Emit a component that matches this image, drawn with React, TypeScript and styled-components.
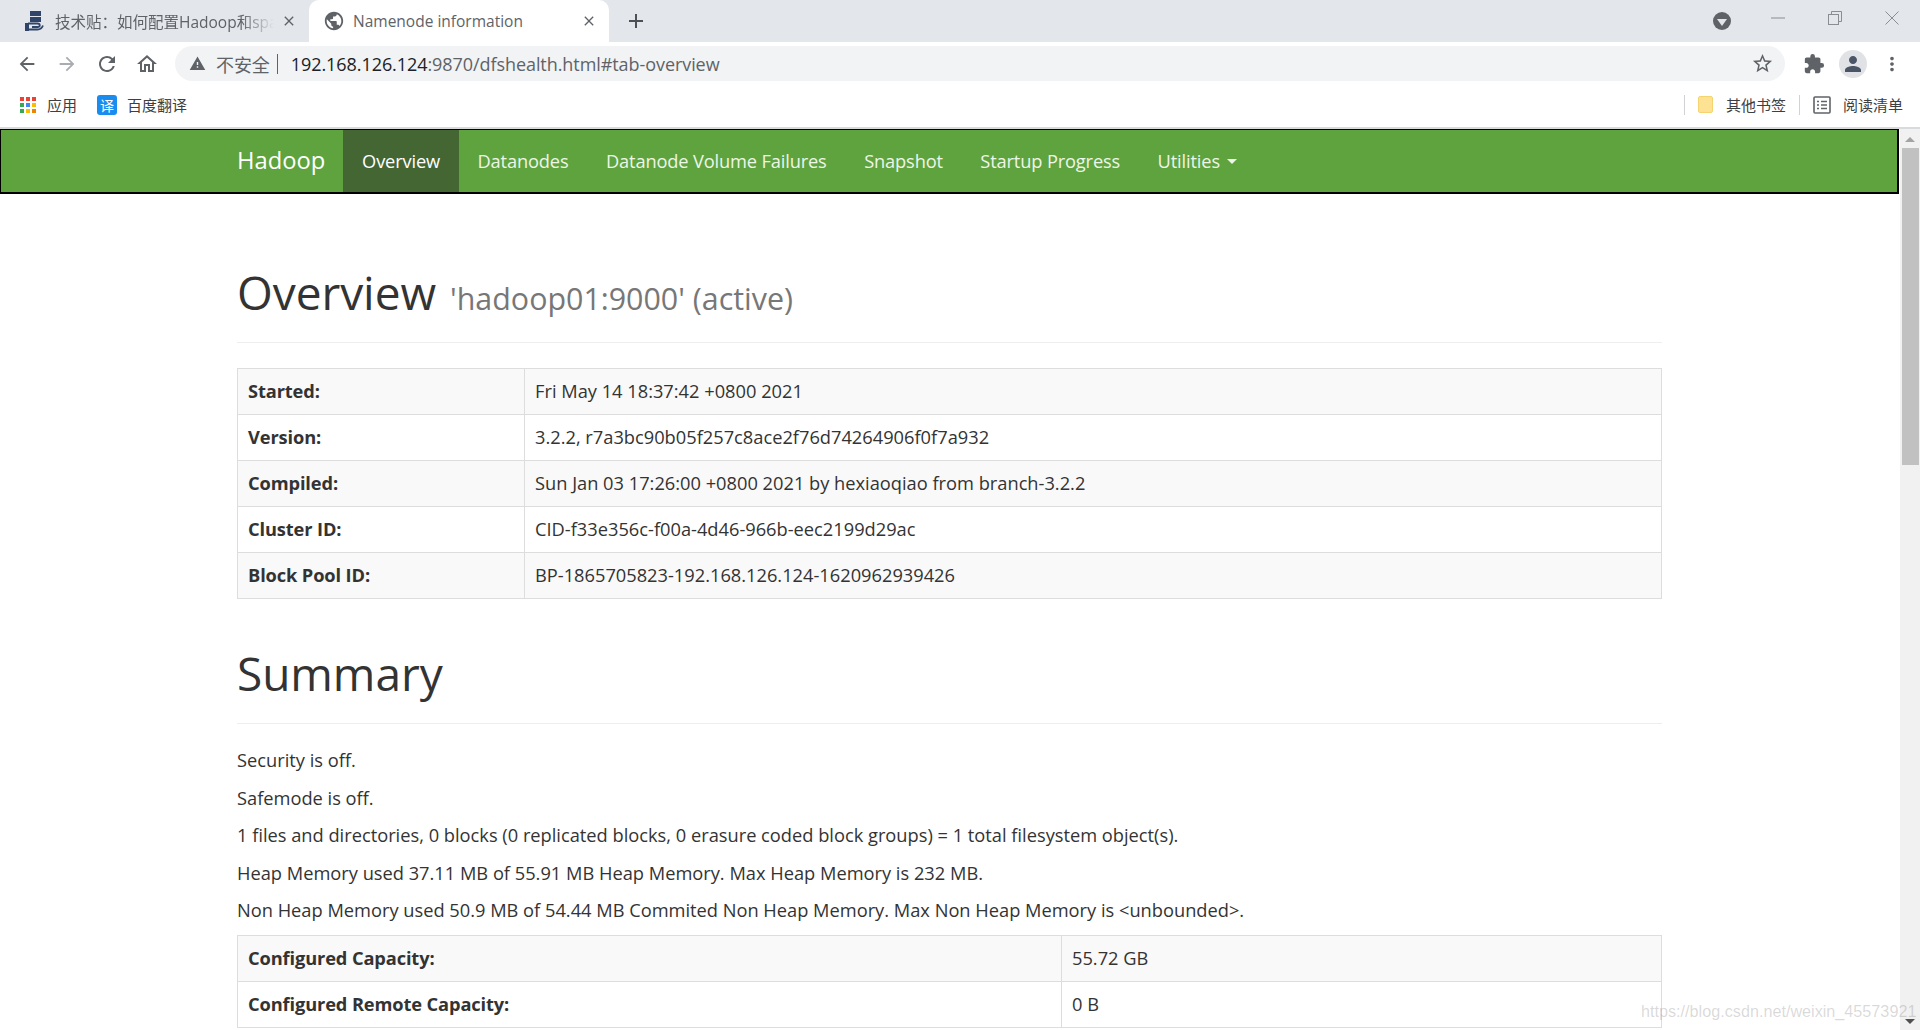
import React from 'react';
import styled, { createGlobalStyle } from 'styled-components';
import {
  MdAdd,
  MdArrowBack,
  MdArrowForward,
  MdClose,
  MdExtension,
  MdMoreVert,
  MdOutlineHome,
  MdPerson,
  MdPublic,
  MdRefresh,
  MdStarBorder,
  MdWarning,
} from 'react-icons/md';

const UI_FONT = '"Open Sans", "Noto Sans CJK SC", sans-serif';

const GlobalStyle = createGlobalStyle`
  html, body {
    margin: 0;
    height: 100%;
    overflow: hidden;
    background: #fff;
  }
  * { box-sizing: border-box; }
`;

const Window = styled.div`
  position: relative;
  display: flex;
  flex-direction: column;
  width: 1920px;
  height: 1030px;
  overflow: hidden;
  font-family: ${UI_FONT};
`;

const TabStrip = styled.div`
  display: flex;
  align-items: center;
  height: 42px;
  flex: none;
  background: #e3e6ea;
`;

const Tab = styled.div<{ $active?: boolean }>`
  display: flex;
  align-items: center;
  width: ${(p) => (p.$active ? '300px' : '309px')};
  height: 42px;
  padding: ${(p) => (p.$active ? '0 12px 0 14px' : '0 12px 0 24px')};
  border-radius: ${(p) => (p.$active ? '10px 10px 0 0' : '0')};
  background: ${(p) => (p.$active ? '#fff' : 'transparent')};
  color: #5f6368;
  flex: none;
`;

const TabTitle = styled.span<{ $fade?: boolean }>`
  flex: 1;
  margin-left: ${(p) => (p.$fade ? '11px' : '8px')};
  margin-right: ${(p) => (p.$fade ? '7px' : '0')};
  overflow: hidden;
  white-space: nowrap;
  font-size: 15.5px;
  ${(p) =>
    p.$fade &&
    `-webkit-mask-image: linear-gradient(to right, #000 85%, transparent 100%);
     mask-image: linear-gradient(to right, #000 85%, transparent 100%);`}
`;

const NewTab = styled.div`
  display: flex;
  margin-left: 15px;
  color: #4d5156;
`;

const StripRight = styled.div`
  display: flex;
  align-items: center;
  margin-left: auto;
  height: 42px;
`;

const TabSearch = styled.div`
  width: 18px;
  height: 18px;
  margin-right: 18px;
  border-radius: 50%;
  background: #5f6368;
  display: flex;
  align-items: center;
  justify-content: center;
  &::after {
    content: '';
    margin-top: 3px;
    border-left: 5px solid transparent;
    border-right: 5px solid transparent;
    border-top: 7px solid #e3e6ea;
  }
`;

const WindowButton = styled.div`
  display: flex;
  justify-content: center;
  width: 57px;
  margin-top: -6px;
  color: #8a8d91;
`;

const Toolbar = styled.div`
  display: flex;
  align-items: center;
  height: 42px;
  flex: none;
  background: #fff;
  padding-left: 7px;
  padding-top: 1px;
`;

const ToolButton = styled.div<{ $dim?: boolean; $width?: number }>`
  display: flex;
  align-items: center;
  justify-content: center;
  width: ${(p) => p.$width ?? 40}px;
  color: ${(p) => (p.$dim ? '#a9acb0' : '#5f6368')};
  flex: none;
`;

const Omnibox = styled.div`
  display: flex;
  align-items: center;
  width: 1610px;
  height: 35px;
  margin-left: 8px;
  margin-right: 9px;
  padding: 0 11px 0 14px;
  border-radius: 18px;
  background: #f1f3f4;
  font-size: 18px;
  letter-spacing: -0.07px;
  flex: none;
`;

const Insecure = styled.span`
  margin-left: 10px;
  color: #5f6368;
  font-size: 18px;
`;

const Divider = styled.span`
  width: 1px;
  height: 20px;
  margin: 0 13px 0 7px;
  background: #5f6368;
`;

const Host = styled.span`
  color: #202124;
`;

const UrlRest = styled.span`
  flex: 1;
  color: #5f6368;
`;

const Avatar = styled.div`
  display: flex;
  align-items: center;
  justify-content: center;
  width: 28px;
  height: 28px;
  margin: 0 11px 0 6px;
  border-radius: 50%;
  background: #e0e2e6;
  color: #4a5568;
`;

const BookmarkBar = styled.div`
  display: flex;
  align-items: center;
  height: 43px;
  flex: none;
  padding: 0 17px 2px 20px;
  background: #fff;
  font-size: 15px;
  color: #3c4043;
`;

const Bookmark = styled.div<{ $gap: number; $after: number }>`
  display: flex;
  align-items: center;
  gap: ${(p) => p.$gap}px;
  margin-right: ${(p) => p.$after}px;
`;

const AppsGrid = styled.div`
  display: grid;
  grid-template-columns: repeat(3, 4px);
  grid-auto-rows: 4px;
  gap: 2px;
`;

const AppDot = styled.i<{ $color: string }>`
  background: ${(p) => p.$color};
`;

const TranslateBadge = styled.div`
  display: flex;
  align-items: center;
  justify-content: center;
  width: 20px;
  height: 20px;
  border-radius: 3px;
  background: #1a8cf0;
  color: #fff;
  font-size: 14px;
`;

const BarSeparator = styled.div`
  width: 1px;
  height: 20px;
  background: #d0d2d5;
`;

const BookmarksRight = styled.div`
  display: flex;
  align-items: center;
  margin-left: auto;
`;

const BookmarkGlyph = styled.svg`
  margin-left: 13px;
`;

const Viewport = styled.div`
  display: flex;
  flex: 1;
  min-height: 0;
  border-top: 2px solid #d9dadc;
`;

const Page = styled.div`
  flex: 1;
  min-width: 0;
  overflow: hidden;
  color: #333;
  font-size: 18.25px;
  line-height: 25px;
`;

const Navbar = styled.nav`
  display: flex;
  width: 1899px;
  height: 65px;
  padding-left: 236px;
  background: #5ea33e;
  border: 1px solid #000;
  border-width: 1px 2px 2px 1px;
`;

const Brand = styled.a`
  display: flex;
  align-items: center;
  padding: 0 18px 2px 0;
  font-size: 23.75px;
  color: #fff;
`;

const NavLink = styled.a<{ $active?: boolean }>`
  display: flex;
  align-items: center;
  gap: 7px;
  padding: 0 18.75px 2px;
  font-size: 18.25px;
  letter-spacing: -0.15px;
  color: ${(p) => (p.$active ? '#fff' : '#eef5e9')};
  background: ${(p) => (p.$active ? '#446633' : 'transparent')};
`;

const Caret = styled.span`
  border-left: 5px solid transparent;
  border-right: 5px solid transparent;
  border-top: 5px solid #eef5e9;
  margin-top: 2px;
`;

const Content = styled.main`
  width: 1425px;
  margin-left: 237px;
`;

const PageHeader = styled.div<{ $top: number; $height: number }>`
  display: flex;
  align-items: flex-end;
  height: ${(p) => p.$height}px;
  margin-top: ${(p) => p.$top}px;
  padding-bottom: 25px;
  border-bottom: 1px solid #eee;
`;

const Heading = styled.h1`
  margin: 0;
  font-size: 46px;
  line-height: 50px;
  font-weight: 400;
  letter-spacing: -0.05px;
  color: #333;
`;

const HeadingNote = styled.small`
  margin-left: 14px;
  font-size: 30.4px;
  line-height: 1;
  letter-spacing: 0;
  color: #777;
`;

const InfoTable = styled.table<{ $labelWidth: number; $top: number }>`
  width: 100%;
  margin-top: ${(p) => p.$top}px;
  border-collapse: collapse;
  table-layout: fixed;

  th, td {
    height: 46px;
    padding: 0 10px 2px;
    border: 1px solid #ddd;
    text-align: left;
  }
  th {
    width: ${(p) => p.$labelWidth}px;
    font-weight: 700;
    letter-spacing: -0.12px;
  }
  tr:nth-child(odd) {
    background: #f9f9f9;
  }
`;

const Para = styled.p`
  margin: 0 0 12.5px;
`;

const Summary = styled.div`
  margin-top: 23px;
`;

const Scrollbar = styled.div`
  display: flex;
  flex-direction: column;
  align-items: center;
  width: 20px;
  margin-left: 1px;
  flex: none;
  background: #f1f1f1;
`;

const ScrollArrow = styled.div<{ $down?: boolean }>`
  width: 0;
  margin: ${(p) => (p.$down ? 'auto 0 6px' : '8px 0 6px')};
  border-left: 5px solid transparent;
  border-right: 5px solid transparent;
  ${(p) => (p.$down ? 'border-top: 5px solid #505050;' : 'border-bottom: 5px solid #a3a3a3;')}
`;

const ScrollThumb = styled.div`
  width: 17px;
  height: 317px;
  background: #c1c1c1;
`;

const Watermark = styled.div`
  position: absolute;
  left: 1641px;
  top: 999px;
  font-family: "Liberation Sans", sans-serif;
  font-size: 16.2px;
  line-height: 24px;
  white-space: nowrap;
  color: rgba(120, 120, 120, 0.28);
`;

const overviewRows = [
  ['Started:', 'Fri May 14 18:37:42 +0800 2021'],
  ['Version:', '3.2.2, r7a3bc90b05f257c8ace2f76d74264906f0f7a932'],
  ['Compiled:', 'Sun Jan 03 17:26:00 +0800 2021 by hexiaoqiao from branch-3.2.2'],
  ['Cluster ID:', 'CID-f33e356c-f00a-4d46-966b-eec2199d29ac'],
  ['Block Pool ID:', 'BP-1865705823-192.168.126.124-1620962939426'],
];

const summaryLines = [
  'Security is off.',
  'Safemode is off.',
  '1 files and directories, 0 blocks (0 replicated blocks, 0 erasure coded block groups) = 1 total filesystem object(s).',
  'Heap Memory used 37.11 MB of 55.91 MB Heap Memory. Max Heap Memory is 232 MB.',
  'Non Heap Memory used 50.9 MB of 54.44 MB Commited Non Heap Memory. Max Non Heap Memory is <unbounded>.',
];

const capacityRows = [
  ['Configured Capacity:', '55.72 GB'],
  ['Configured Remote Capacity:', '0 B'],
];

const appColors = ['#ea4335', '#ea4335', '#ea4335', '#34a853', '#4285f4', '#fbbc04', '#34a853', '#fbbc04', '#ea8600'];

const navItems = ['Datanodes', 'Datanode Volume Failures', 'Snapshot', 'Startup Progress'];

const CsdnIcon = () => (
  <svg width="20" height="22" viewBox="0 0 20 22" fill="none">
    <rect x="6" y="1" width="11" height="5" fill="#2f4468" />
    <rect x="6" y="7" width="11" height="5" fill="#2f4468" />
    <path d="M4 13.5h9.5c3 0 3 3.5 0 3.5H8" stroke="#2f4468" strokeWidth="1.8" />
    <path d="M4 19.5h9.5c2.5 0 4.5-1.5 5.5-4" stroke="#2f4468" strokeWidth="1.8" />
    <rect x="1" y="13" width="4" height="8" fill="#2f4468" />
  </svg>
);

const App: React.FC = () => {
  return (
    <Window>
      <GlobalStyle />
      <TabStrip>
        <Tab>
          <CsdnIcon />
          <TabTitle $fade>技术贴：如何配置Hadoop和spark</TabTitle>
          <MdClose size={16} color="#5f6368" />
        </Tab>
        <Tab $active>
          <MdPublic size={22} color="#5f6368" />
          <TabTitle>Namenode information</TabTitle>
          <MdClose size={16} color="#5f6368" />
        </Tab>
        <NewTab>
          <MdAdd size={24} />
        </NewTab>
        <StripRight>
          <TabSearch />
          <WindowButton>
            <svg width="14" height="14" viewBox="0 0 14 14" stroke="currentColor" fill="none">
              <path d="M0 7h14" />
            </svg>
          </WindowButton>
          <WindowButton>
            <svg width="14" height="14" viewBox="0 0 14 14" stroke="currentColor" fill="none">
              <rect x="0.5" y="3.5" width="10" height="10" />
              <path d="M3.5 3.5v-3h10v10h-3" />
            </svg>
          </WindowButton>
          <WindowButton>
            <svg width="14" height="14" viewBox="0 0 14 14" stroke="currentColor" fill="none">
              <path d="M0.5 0.5l13 13M13.5 0.5l-13 13" />
            </svg>
          </WindowButton>
        </StripRight>
      </TabStrip>

      <Toolbar>
        <ToolButton><MdArrowBack size={22} /></ToolButton>
        <ToolButton $dim><MdArrowForward size={22} /></ToolButton>
        <ToolButton><MdRefresh size={24} /></ToolButton>
        <ToolButton><MdOutlineHome size={24} /></ToolButton>
        <Omnibox>
          <MdWarning size={17} color="#5f6368" />
          <Insecure>不安全</Insecure>
          <Divider />
          <Host>192.168.126.124</Host>
          <UrlRest>:9870/dfshealth.html#tab-overview</UrlRest>
          <MdStarBorder size={23} color="#5f6368" />
        </Omnibox>
        <ToolButton $width={39}><MdExtension size={22} /></ToolButton>
        <Avatar><MdPerson size={24} /></Avatar>
        <ToolButton $width={28}><MdMoreVert size={22} /></ToolButton>
      </Toolbar>

      <BookmarkBar>
        <Bookmark $gap={11} $after={20}>
          <AppsGrid>
            {appColors.map((c, i) => (
              <AppDot key={i} $color={c} />
            ))}
          </AppsGrid>
          <span>应用</span>
        </Bookmark>
        <Bookmark $gap={10} $after={0}>
          <TranslateBadge>译</TranslateBadge>
          <span>百度翻译</span>
        </Bookmark>
        <BookmarksRight>
          <BarSeparator />
          <Bookmark $gap={12} $after={13}>
            <BookmarkGlyph width="16" height="17" viewBox="0 0 16 17">
              <rect x="0.5" y="0.5" width="14" height="16" rx="1.5" fill="#fde293" stroke="#f5d46e" />
            </BookmarkGlyph>
            <span>其他书签</span>
          </Bookmark>
          <BarSeparator />
          <Bookmark $gap={12} $after={0}>
            <BookmarkGlyph width="18" height="18" viewBox="0 0 18 18" fill="none" stroke="#5f6368" strokeWidth="1.6">
              <rect x="1" y="1" width="16" height="16" rx="1" />
              <path d="M4 5.5h2M8 5.5h6M4 9h2M8 9h6M4 12.5h2M8 12.5h6" />
            </BookmarkGlyph>
            <span>阅读清单</span>
          </Bookmark>
        </BookmarksRight>
      </BookmarkBar>

      <Viewport>
        <Page>
          <Navbar>
            <Brand>Hadoop</Brand>
            <NavLink $active>Overview</NavLink>
            {navItems.map((item) => (
              <NavLink key={item}>{item}</NavLink>
            ))}
            <NavLink>
              Utilities
              <Caret />
            </NavLink>
          </Navbar>
          <Content>
            <PageHeader $top={51} $height={98}>
              <Heading>
                Overview
                <HeadingNote>'hadoop01:9000' (active)</HeadingNote>
              </Heading>
            </PageHeader>
            <InfoTable $labelWidth={287} $top={25}>
              <tbody>
                {overviewRows.map(([label, value]) => (
                  <tr key={label}>
                    <th>{label}</th>
                    <td>{value}</td>
                  </tr>
                ))}
              </tbody>
            </InfoTable>
            <PageHeader $top={25} $height={100}>
              <Heading>Summary</Heading>
            </PageHeader>
            <Summary>
              {summaryLines.map((line) => (
                <Para key={line}>{line}</Para>
              ))}
            </Summary>
            <InfoTable $labelWidth={824} $top={1}>
              <tbody>
                {capacityRows.map(([label, value]) => (
                  <tr key={label}>
                    <th>{label}</th>
                    <td>{value}</td>
                  </tr>
                ))}
              </tbody>
            </InfoTable>
          </Content>
        </Page>
        <Scrollbar>
          <ScrollArrow />
          <ScrollThumb />
          <ScrollArrow $down />
        </Scrollbar>
      </Viewport>
      <Watermark>https://blog.csdn.net/weixin_45573921</Watermark>
    </Window>
  );
};

export default App;
